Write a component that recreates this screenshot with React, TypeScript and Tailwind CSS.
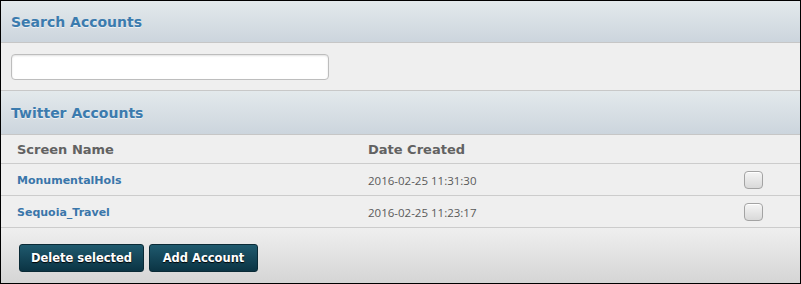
const accounts = [
  { name: 'MonumentalHols', created: '2016-02-25 11:31:30' },
  { name: 'Sequoia_Travel', created: '2016-02-25 11:23:17' },
]

const buttons = [
  { label: 'Delete selected', w: 'w-[125px]' },
  { label: 'Add Account', w: 'w-[109px]' },
]

function PanelHeader({ title, h }: { title: string; h: string }) {
  return (
    <div
      className={`${h} flex items-center px-[10px] pt-[2px] border-b border-[#c6c6c6] bg-gradient-to-b from-[#e3e9ec] to-[#ccd5dd]`}
    >
      <h2 className="font-['DejaVu_Sans',Verdana,sans-serif] font-bold text-[14px] text-[#3b7bae] [text-shadow:0_1px_0_rgba(255,255,255,0.6)]">
        {title}
      </h2>
    </div>
  )
}

function Checkbox() {
  return (
    <span className="block w-[19px] h-[18px] rounded-[4px] border border-[#a3a3a3] bg-gradient-to-b from-[#f5f5f5] to-[#d9d9d9] shadow-[inset_0_1px_0_#fff]" />
  )
}

export default function App() {
  return (
    <div className="w-[801px] h-[284px] border border-black bg-[#efefef] flex flex-col">
      <PanelHeader title="Search Accounts" h="h-[42px]" />

      <div className="h-[48px] shrink-0 px-[10px] pt-[11px] border-b border-[#c8c8c8]">
        <input
          type="text"
          className="block w-[318px] h-[26px] rounded-[4px] border border-[#bdbdbd] bg-white shadow-[inset_0_1px_2px_rgba(0,0,0,0.12)] outline-none"
        />
      </div>

      <PanelHeader title="Twitter Accounts" h="h-[44px]" />

      <div className="grid grid-cols-[351px_1fr_auto] items-center shrink-0 h-[29px] pt-[1px] px-[16px] border-b border-[#cccccc] font-['DejaVu_Sans',Verdana,sans-serif] font-bold text-[13px] text-[#626262]">
        <span>Screen Name</span>
        <span>Date Created</span>
        <span />
      </div>

      {accounts.map((a) => (
        <div
          key={a.name}
          className="grid grid-cols-[351px_1fr_auto] items-center shrink-0 h-[32px] pl-[16px] pr-[37px] border-b border-[#cccccc]"
        >
          <a className="pt-[4px] font-['DejaVu_Sans',Verdana,sans-serif] font-bold text-[11px] text-[#3a76aa] cursor-pointer">
            {a.name}
          </a>
          <span className="pt-[2px] font-['Open_Sans',sans-serif] text-[11.5px] text-[#5a5a5a]">
            {a.created}
          </span>
          <Checkbox />
        </div>
      ))}

      <div className="flex-1 flex items-start gap-[5px] pt-[16px] px-[18px] bg-gradient-to-b from-[#efefef] to-[#d5d5d5]">
        {buttons.map((b) => (
          <button
            key={b.label}
            className={`${b.w} h-[28px] pt-[2px] rounded-[3px] border border-[#0a2a36] bg-gradient-to-b from-[#1f5a6e] to-[#0b3444] font-['DejaVu_Sans',Verdana,sans-serif] font-bold text-[11.5px] text-white [text-shadow:0_1px_1px_#000]`}
          >
            {b.label}
          </button>
        ))}
      </div>
    </div>
  )
}
